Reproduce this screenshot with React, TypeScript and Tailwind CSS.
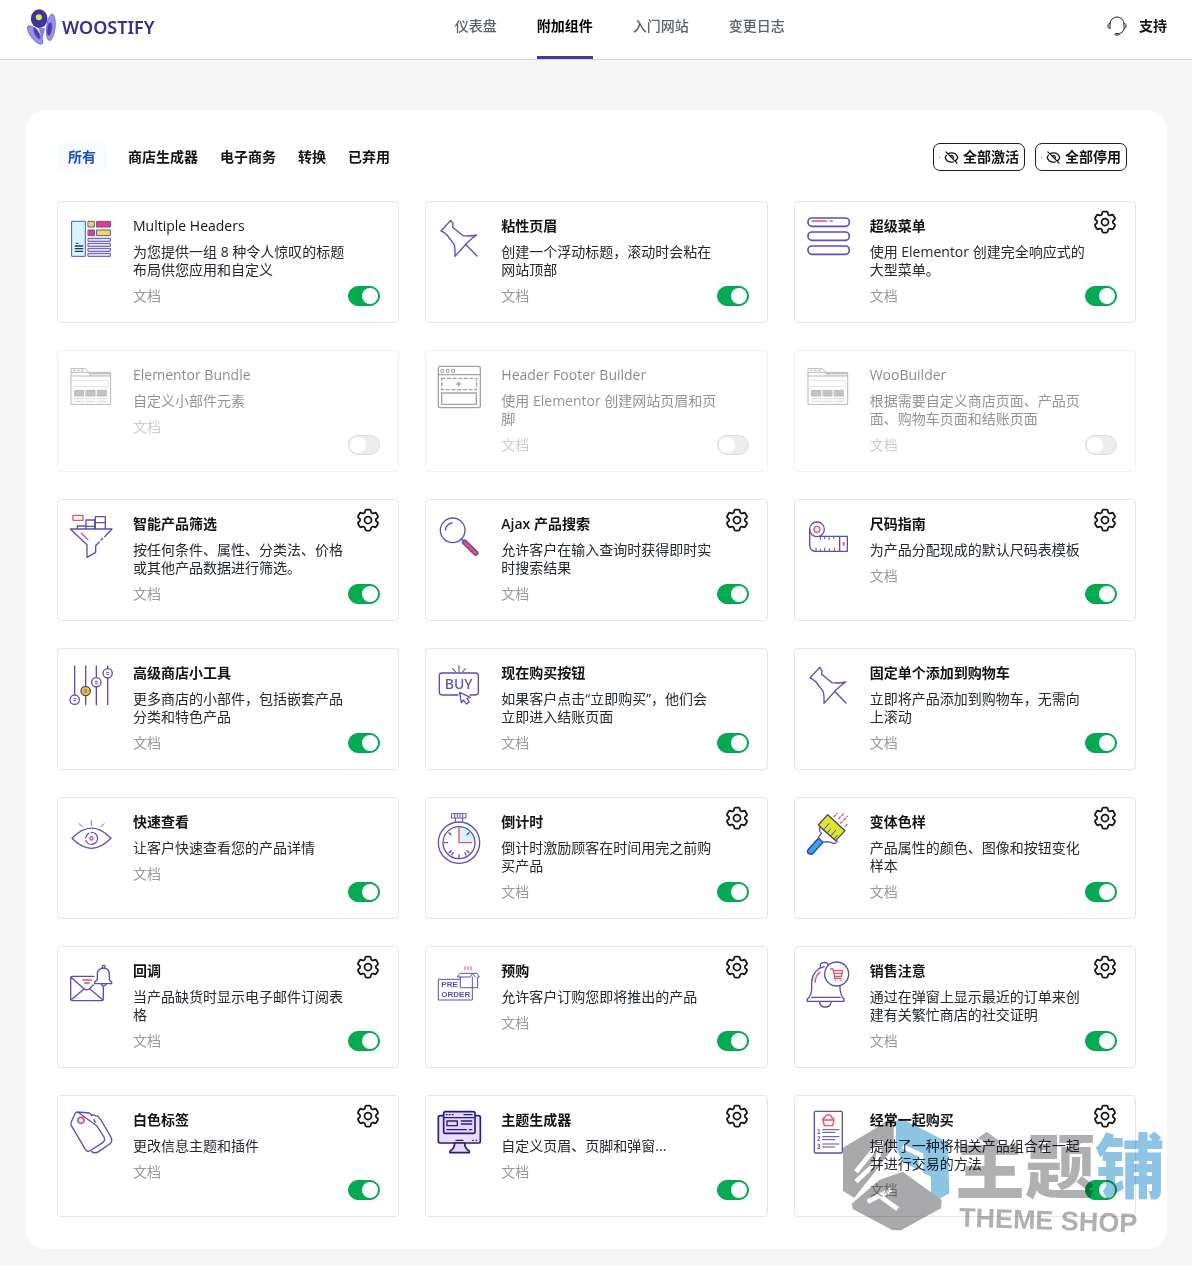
import { useState, type ReactNode } from "react";
import { HiOutlineCog6Tooth, HiOutlineEyeSlash } from "react-icons/hi2";

interface Addon {
  id: string;
  title: string;
  description: string;
  icon: ReactNode;
  enabled: boolean;
  hasSettings?: boolean;
}

const PURPLE = "#5a4fb5";
const PINK = "#e0506f";

const NAV_ITEMS = ["仪表盘", "附加组件", "入门网站", "变更日志"];
const TABS = ["所有", "商店生成器", "电子商务", "转换", "已弃用"];

function IconFrame({ children }: { children: ReactNode }) {
  return (
    <svg
      viewBox="0 0 129 129"
      className="size-[43px] shrink-0 overflow-visible"
      fill="none"
      stroke={PURPLE}
      strokeWidth="4"
      strokeLinejoin="round"
      strokeLinecap="round"
      aria-hidden="true"
    >
      {children}
    </svg>
  );
}

const HeadersIcon = () => (
  <IconFrame>
    <rect x="6" y="16" width="40" height="105" fill="#d5f6fb" strokeWidth="3" />
    <path d="M16 90h22M16 98h22M16 106h22M20 82h3" stroke="#27325e" />
    <rect x="55" y="16" width="18" height="17" fill="#e6e04a" strokeWidth="3" />
    <rect x="81" y="16" width="40" height="17" fill="#f03a78" strokeWidth="3" />
    <rect x="55" y="42" width="18" height="17" fill="#f03a78" strokeWidth="3" />
    <rect x="81" y="42" width="40" height="17" fill="#e6e04a" strokeWidth="3" />
    <path
      d="M55 67h66v9H55zM55 82h66v9H55zM55 97h66v9H55zM55 112h66v9H55z"
      fill="#e3e0fa"
      strokeWidth="3"
    />
  </IconFrame>
);

const PinIcon = () => (
  <IconFrame>
    <path d="M9 45 38 13l7 9-1 12 31 25q22 3 41-2-15 10-29 24L51 121q1-22-2-35L27 57Q17 47 9 45ZM84 86l33 34" />
  </IconFrame>
);

const MenuIcon = () => (
  <IconFrame>
    <g strokeWidth="5">
      <rect x="3" y="6" width="124" height="25" rx="12" />
      <rect x="3" y="48" width="124" height="25" rx="12" />
      <rect x="3" y="90" width="124" height="25" rx="12" />
    </g>
    <path d="M15 15h43M70 15h6" stroke={PINK} />
  </IconFrame>
);

const BrowserIcon = () => (
  <IconFrame>
    <g stroke="#777" strokeWidth="3">
      <path d="M3 117V11h44l9 11h66v95Z" />
      <path d="M3 22h53l6 11h60v-8H60M3 33h59" fill="#ccc" />
      <path d="M10 16h6M22 16h6M34 16h6" />
      <path d="M10 46h105v18H10" stroke="#ccc" />
      <path d="M15 76h26v17H15zM49 76h26v17H49zM83 76h26v17H83z" fill="#888" />
      <path d="M15 101h26M49 101h26M83 101h26M15 109h26M49 109h26M83 109h26" stroke="#aaa" />
    </g>
  </IconFrame>
);

const LayoutIcon = () => (
  <IconFrame>
    <g stroke="#4a4a4a" strokeWidth="4">
      <rect x="1" y="4" width="126" height="124" rx="5" />
      <path d="M1 29h126M62 51v12M56 57h12" />
      <path d="M10 13h7v9h-7zM26 13h7v9h-7zM42 13h7v9h-7z" strokeWidth="3" />
      <rect x="11" y="40" width="105" height="34" strokeDasharray="9 8" />
      <rect x="11" y="84" width="104" height="34" />
    </g>
  </IconFrame>
);

const FunnelIcon = () => (
  <IconFrame>
    <path d="M104 68 126 45H1l50 47v38l26-15V95l11-11M98 73l-5 5" />
    <path d="M22 44V36h25M48 44V18h26v26M76 44V8h30v36M48 37h26M76 26h30" />
    <path d="M9 4h30v15H9zM34 58l20 19" stroke={PINK} />
  </IconFrame>
);

const SearchIcon = () => (
  <IconFrame>
    <circle cx="44" cy="49" r="37" />
    <path d="M22 48q3-18 20-21" />
    <path d="m70 75 8 8" />
    <path d="m80 85 33 32" strokeWidth="17" />
    <path d="m80 85 33 32" stroke={PINK} strokeWidth="9" />
  </IconFrame>
);

const RulerIcon = () => (
  <IconFrame>
    <circle cx="30" cy="46" r="22" />
    <circle cx="30" cy="46" r="9" stroke={PINK} />
    <path d="M8 46v48q2 18 18 18h95V67H38M98 67v45" />
    <path d="M40 67v10M53 67v7M66 67v10M80 67v7M27 112v-10M40 112v-7M53 112v-10M67 112v-7M82 112v-10" strokeWidth="3" />
    <path d="M109 86v7h2v-7z" stroke={PINK} />
  </IconFrame>
);

const SlidersIcon = () => (
  <IconFrame>
    <path d="M14 9v85M47 9v61M47 98v27M79 9v35M79 72v53M113 9v8M113 45v80" />
    <circle cx="14" cy="110" r="14" />
    <circle cx="47" cy="84" r="14" fill="#f1c232" stroke="#4d4670" />
    <circle cx="79" cy="58" r="14" />
    <circle cx="113" cy="31" r="14" />
    <path d="M11 107h6M11 113h6M44 81h6M44 87h6M76 55h6M76 61h6M110 28h6M110 34h6" strokeWidth="3" />
  </IconFrame>
);

const BuyIcon = () => (
  <IconFrame>
    <path d="M60 96H12q-8 0-8-8V38q0-8 8-8h101q8 0 8 8v50q0 8-8 8h-17" />
    <path d="m44 17 8 9M63 8v17M82 17l-8 9" stroke="#77729b" />
    <text
      x="62"
      y="78"
      textAnchor="middle"
      fontSize="42"
      fontFamily="Noto Sans, sans-serif"
      fontWeight="500"
      fill={PURPLE}
      stroke="none"
    >
      BUY
    </text>
    <path d="m65 88 5 31 7-8 8 12 9-6-7-11 10-3Z" fill="#fff" />
  </IconFrame>
);

const EyeIcon = () => (
  <IconFrame>
    <path d="M6 79q58-61 117 0-59 60-117 0Z" />
    <path d="M64 61a18 18 0 1 1-16 25M47 77q3-9 9-13" />
    <circle cx="64" cy="79" r="5" stroke={PINK} />
    <path d="m27 35 10 9M64 26v14M102 35l-9 9" stroke="#a8586d" strokeWidth="3" />
  </IconFrame>
);

const StopwatchIcon = () => (
  <IconFrame>
    <path d="M63 44v48h48q-2-44-48-48Z" fill="#d3f5fb" stroke="none" />
    <circle cx="63" cy="92" r="62" />
    <circle cx="63" cy="92" r="48" />
    <path d="M42 5h42v13H42zM52 18v11M74 18v11M50 8v7M58 8v7M66 8v7M74 8v7" strokeWidth="3" />
    <path d="M63 128v9M20 92h9M33 62l6 6M93 62l-6 6M33 122l6-6M93 122l-6-6M42 129l3-7M84 129l-3-7" />
    <path d="M63 45v47h37" stroke={PINK} />
  </IconFrame>
);

const BrushIcon = () => (
  <IconFrame>
    <path d="M5 111q-8 9 1 14t14-3l28-31-13-13Z" fill="#32a8ee" stroke="#2b3f8f" />
    <path d="m34 77 9-13q-10-10-3-19l51 43q-9 11-19 3L59 89l-11 2Z" fill="#fff" />
    <path d="M34 39 62 8l52 48-28 30Z" fill="#dfe530" stroke="#46496b" />
    <path d="m51 52 15-17M62 61l9-10M72 71l14-16M82 80l9-10" stroke="#46496b" strokeWidth="3" />
    <path d="m81 14 10-10M95 20l16-16M101 33l20-20M115 43l8-9" stroke={PINK} strokeDasharray="7 6" />
  </IconFrame>
);

const MailBellIcon = () => (
  <IconFrame>
    <path d="M72 46H6q-4 0-4 4v65q0 4 4 4h90q4 0 4-4V76M3 49l39 34q8 7 16 0l12-11M3 117l39-33M99 117 60 84" />
    <path d="M74 68h51v-5l-7-7V38q-1-15-17-17-18 2-19 17v18l-8 7ZM97 20q-1-7 4-7t4 7M94 70q6 10 14 0" fill="#fff" />
    <path d="M39 57h25M44 66h14" stroke={PINK} />
  </IconFrame>
);

const PreorderIcon = () => (
  <IconFrame>
    <path d="M66 55H1v62h102V81" strokeWidth="3" />
    <path d="M67 79V48h-9l8-11h51l7 11h-5v31ZM67 48h30l6-10 9 10M103 48v31" strokeWidth="3" />
    <path d="M81 17v10M90 17v10M99 17v10" stroke={PINK} strokeWidth="3" />
    <g
      fontSize="24"
      fontFamily="Liberation Sans, sans-serif"
      fontWeight="700"
      fill={PURPLE}
      stroke="none"
    >
      <text x="10" y="79">PRE</text>
      <text x="10" y="108">ORDER</text>
    </g>
  </IconFrame>
);

const BellCartIcon = () => (
  <IconFrame>
    <path d="M52 17Q18 25 14 62v22q-1 21-13 30v7h110v-7q-9-8-12-30V73" />
    <path d="M40 20q-3-15 12-16 10 0 12 8M38 124q2 14 17 14t17-14M14 109h86" />
    <path d="M24 64q2-22 15-30" stroke={PINK} />
    <circle cx="89" cy="39" r="36" fill="#fff" />
    <path d="M71 24h7l5 22h20l4-17H80M81 37h24M84 46l-2 6h21M85 58h1M101 58h1" stroke={PINK} />
  </IconFrame>
);

const TagsIcon = () => (
  <IconFrame>
    <path d="M23 6 58 9l8 8M72 29l4 8M80 47l22 34q5 9-3 16l-40 26q-8 3-13-5L4 47q-3-7 0-12L15 11q3-5 8-5Z" />
    <path d="m66 14 18 5 9 11 30 52q6 12-4 20L87 124q-12 8-22 1" />
    <circle cx="33" cy="31" r="9" stroke={PINK} strokeWidth="5" />
  </IconFrame>
);

const MonitorIcon = () => (
  <IconFrame>
    <g stroke="#2a1d78" strokeWidth="5">
      <path d="M14 17H6q-5 0-5 5v72q0 5 5 5h116q5 0 5-5V22q0-5-5-5h-8" fill="#e9defd" />
      <rect x="17" y="5" width="94" height="65" rx="5" fill="#e4d6fc" />
      <path d="M25 14h2M34 14h2M43 14h2M78 14h24M20 23h88" strokeWidth="4" />
      <path d="M27 33h31v14H27zM70 33h31M70 42h31M27 59h58M94 59h7M54 91h21M104 91h2M114 91h2" strokeWidth="4" />
      <path d="M50 99q0 17-14 24v5h58v-5q-14-7-14-24Z" fill="#e4d6fc" />
    </g>
  </IconFrame>
);

const ChecklistIcon = () => (
  <IconFrame>
    <rect x="22" y="4" width="84" height="125" rx="4" />
    <path d="M48 30h33l-4 17H52ZM47 30q0-7 6-7M80 30q0-7-5-7M53 24q3-10 11-10t11 10" stroke={PINK} />
    <path d="M47 59h49M47 67h36M47 80h49M47 89h36M47 102h49M47 111h36" strokeWidth="3" />
    <g fontSize="19" fontFamily="Liberation Sans, sans-serif" fontWeight="700" fill={PURPLE} stroke="none">
      <text x="30" y="71">1</text>
      <text x="30" y="94">2</text>
      <text x="30" y="117">3</text>
    </g>
  </IconFrame>
);

const ADDONS: Addon[] = [
  { id: "multiple-headers", title: "Multiple Headers", description: "为您提供一组 8 种令人惊叹的标题布局供您应用和自定义", icon: <HeadersIcon />, enabled: true },
  { id: "sticky-header", title: "粘性页眉", description: "创建一个浮动标题，滚动时会粘在网站顶部", icon: <PinIcon />, enabled: true },
  { id: "mega-menu", title: "超级菜单", description: "使用 Elementor 创建完全响应式的大型菜单。", icon: <MenuIcon />, enabled: true, hasSettings: true },
  { id: "elementor-bundle", title: "Elementor Bundle", description: "自定义小部件元素", icon: <BrowserIcon />, enabled: false },
  { id: "header-footer", title: "Header Footer Builder", description: "使用 Elementor 创建网站页眉和页脚", icon: <LayoutIcon />, enabled: false },
  { id: "woobuilder", title: "WooBuilder", description: "根据需要自定义商店页面、产品页面、购物车页面和结账页面", icon: <BrowserIcon />, enabled: false },
  { id: "smart-filter", title: "智能产品筛选", description: "按任何条件、属性、分类法、价格或其他产品数据进行筛选。", icon: <FunnelIcon />, enabled: true, hasSettings: true },
  { id: "ajax-search", title: "Ajax 产品搜索", description: "允许客户在输入查询时获得即时实时搜索结果", icon: <SearchIcon />, enabled: true, hasSettings: true },
  { id: "size-guide", title: "尺码指南", description: "为产品分配现成的默认尺码表模板", icon: <RulerIcon />, enabled: true, hasSettings: true },
  { id: "shop-widgets", title: "高级商店小工具", description: "更多商店的小部件，包括嵌套产品分类和特色产品", icon: <SlidersIcon />, enabled: true },
  { id: "buy-now", title: "现在购买按钮", description: "如果客户点击“立即购买”，他们会立即进入结账页面", icon: <BuyIcon />, enabled: true },
  { id: "sticky-cart", title: "固定单个添加到购物车", description: "立即将产品添加到购物车，无需向上滚动", icon: <PinIcon />, enabled: true },
  { id: "quick-view", title: "快速查看", description: "让客户快速查看您的产品详情", icon: <EyeIcon />, enabled: true },
  { id: "countdown", title: "倒计时", description: "倒计时激励顾客在时间用完之前购买产品", icon: <StopwatchIcon />, enabled: true, hasSettings: true },
  { id: "swatches", title: "变体色样", description: "产品属性的颜色、图像和按钮变化样本", icon: <BrushIcon />, enabled: true, hasSettings: true },
  { id: "callback", title: "回调", description: "当产品缺货时显示电子邮件订阅表格", icon: <MailBellIcon />, enabled: true, hasSettings: true },
  { id: "pre-order", title: "预购", description: "允许客户订购您即将推出的产品", icon: <PreorderIcon />, enabled: true, hasSettings: true },
  { id: "sale-notice", title: "销售注意", description: "通过在弹窗上显示最近的订单来创建有关繁忙商店的社交证明", icon: <BellCartIcon />, enabled: true, hasSettings: true },
  { id: "white-label", title: "白色标签", description: "更改信息主题和插件", icon: <TagsIcon />, enabled: true, hasSettings: true },
  { id: "theme-builder", title: "主题生成器", description: "自定义页眉、页脚和弹窗...", icon: <MonitorIcon />, enabled: true, hasSettings: true },
  { id: "bought-together", title: "经常一起购买", description: "提供了一种将相关产品组合在一起并进行交易的方法", icon: <ChecklistIcon />, enabled: true, hasSettings: true },
];

// Latin-only titles read too heavy next to the Chinese ones at the same weight
const isLatin = (text: string) => /^[A-Za-z ]+$/.test(text);

function Logo() {
  return (
    <a href="#" className="flex items-center gap-[5px]">
      <svg viewBox="0 0 90 108" className="h-9 w-[31px]" aria-hidden="true">
        <g stroke="#6a5bd0" strokeWidth="2">
          <ellipse cx="26" cy="78" rx="13" ry="34" transform="rotate(-38 26 78)" fill="#9a90f0" />
          <ellipse cx="73" cy="55" rx="13" ry="40" transform="rotate(6 73 55)" fill="#9a90f0" />
          <ellipse cx="31" cy="73" rx="6" ry="19" transform="rotate(-26 31 73)" fill="#4a3ba8" />
          <ellipse cx="69" cy="60" rx="7" ry="20" transform="rotate(8 69 60)" fill="#4a3ba8" />
        </g>
        <path d="m36 56 20 2-9 34Z" fill="#8a7de8" />
        <ellipse cx="38" cy="29" rx="25" ry="28" fill="#41339d" />
        <circle cx="37" cy="25" r="9" fill="#dcf03c" />
      </svg>
      <span className="font-['Noto_Sans',sans-serif] text-lg font-semibold text-[#37308f]">WOOSTIFY</span>
    </a>
  );
}

function Header() {
  return (
    <header className="flex h-[60px] justify-between border-b border-[#d6d6d8] bg-white pr-[25px] pl-[26px]">
      <div className="flex items-center pb-[6px]">
        <Logo />
      </div>
      <nav className="flex gap-10">
        {NAV_ITEMS.map((item, index) => (
          <a
            key={item}
            href="#"
            className={
              index === 1
                ? "flex items-center border-b-3 border-[#4537a0] pb-1 font-semibold text-black"
                : "flex items-center pb-[7px] font-medium text-[#5a6268]"
            }
          >
            {item}
          </a>
        ))}
      </nav>
      <a href="#" className="flex items-center gap-3 pb-[7px] pl-[22px] font-semibold">
        <svg viewBox="0 0 20 20" className="size-5" fill="none" stroke="#222" aria-hidden="true">
          <path d="M3 8a7 7 0 0 1 14 0v5q-1 4-5 5M3 7.500H2Q1 8 1 10t1 2.500h1ZM17 7.500h1q1 .5 1 2.500t-1 2.500h-1M8 18.500q0-1 1-1h2.500q1 .5.500 1.500H9q-1 0-1-.5Z" />
        </svg>
        支持
      </a>
    </header>
  );
}

function BulkButton({ label, onClick }: { label: string; onClick: () => void }) {
  return (
    <button
      type="button"
      onClick={onClick}
      className="flex h-7 items-center rounded-[7px] border border-[#1d1d1d] px-[5px] font-semibold"
    >
      <span className="mr-1 size-px bg-gray-500" />
      <HiOutlineEyeSlash className="mr-1 size-[15px]" strokeWidth={2} />
      {label}
    </button>
  );
}

interface AddonCardProps {
  addon: Addon;
  enabled: boolean;
  onToggle: () => void;
}

function AddonCard({ addon, enabled, onToggle }: AddonCardProps) {
  return (
    <article
      className={
        enabled
          ? "flex min-h-[122px] rounded-sm border border-[#e6e6ea] pt-[14px] pr-[18px] pb-4 pl-3"
          : "flex min-h-[122px] rounded-sm border border-[#e6e6ea] pt-[14px] pr-[18px] pb-4 pl-3 opacity-50 grayscale"
      }
    >
      {addon.icon}
      <div className="ml-5 min-w-0 flex-1">
        <h2 className={isLatin(addon.title) ? "leading-5 font-medium" : "leading-5 font-semibold"}>
          {addon.title}
        </h2>
        <p className="mt-[7px] leading-[18px] text-[#23282d]">{addon.description}</p>
        <a href="#" className="mt-2 block leading-[18px] text-[#9a9a9a]">
          文档
        </a>
      </div>
      <div className="-ml-[2px] flex w-8 flex-col items-end">
        {addon.hasSettings && (
          <button type="button" aria-label={`${addon.title} 设置`} className="-mt-2 -mr-[2px]">
            <HiOutlineCog6Tooth className="size-7" />
          </button>
        )}
        <input
          type="checkbox"
          role="switch"
          aria-label={addon.title}
          checked={enabled}
          onChange={onToggle}
          className="mt-auto flex h-5 w-8 shrink-0 appearance-none items-center rounded-full border border-[#bbb] bg-[#ddd] px-px before:size-4 before:rounded-full before:bg-white checked:justify-end checked:border-[#04a14e] checked:bg-[#04ab53]"
        />
      </div>
    </article>
  );
}

function Watermark() {
  return (
    <div className="pointer-events-none absolute right-[2px] bottom-3 flex items-center mix-blend-multiply">
      <svg viewBox="160 980 330 360" className="h-[120px] w-[110px]" aria-hidden="true">
        <path d="M166 1078 305 995 318 1000 318 1075 262 1150 200 1228 166 1208Z" fill="#a9a9ab" />
        <path d="M325 1000 340 990 480 1062 485 1215 455 1232 430 1215 430 1165 345 1120 325 1080Z" fill="#8ec4e4" />
        <path d="M192 1246 275 1175 345 1150 462 1235 460 1260 340 1326 315 1326 195 1262Z" fill="#a9a9ab" />
        <path
          d="M205 1150 280 1058 268 1120 205 1180M345 1075 400 1100 400 1150M240 1240 310 1205M275 1222 330 1262"
          fill="none"
          stroke="#fff"
          strokeWidth="14"
        />
      </svg>
      <div className="ml-1 pt-3">
        <div className="font-['Noto_Sans_CJK_SC',sans-serif] text-[70px] leading-[76px] font-black text-[#b0b0b2]">
          主题<span className="text-[#8ec4e4]">铺</span>
        </div>
        <div className="rotate-2 pt-1 pl-1 font-['Liberation_Sans',sans-serif] text-[27px] leading-8 font-bold text-[#b0b0b2]">
          THEME SHOP
        </div>
      </div>
    </div>
  );
}

export default function App() {
  const [activeTab, setActiveTab] = useState(TABS[0]);
  const [enabledIds, setEnabledIds] = useState<string[]>(
    ADDONS.filter((addon) => addon.enabled).map((addon) => addon.id)
  );

  const toggle = (id: string) => {
    setEnabledIds((current) =>
      current.includes(id) ? current.filter((item) => item !== id) : [...current, id]
    );
  };

  return (
    <div className="min-h-screen bg-[#f6f6f7] font-['Open_Sans','Noto_Sans_CJK_SC',sans-serif] text-sm text-[#141414]">
      <Header />
      <main className="pt-[50px] pr-[25px] pb-[17px] pl-[26px]">
        <section className="relative rounded-[20px] bg-white px-[31px] pt-[33px] pb-8">
          <div className="flex items-center justify-between pr-[9px]">
            <div role="tablist" className="flex">
              {TABS.map((tab) => (
                <button
                  key={tab}
                  type="button"
                  role="tab"
                  aria-selected={tab === activeTab}
                  onClick={() => setActiveTab(tab)}
                  className={
                    tab === activeTab
                      ? "mr-[10px] h-7 rounded bg-[#f8fcff] px-[11px] font-semibold text-[#1b4fc4]"
                      : "h-7 px-[11px] font-semibold"
                  }
                >
                  {tab}
                </button>
              ))}
            </div>
            <div className="flex gap-[10px]">
              <BulkButton label="全部激活" onClick={() => setEnabledIds(ADDONS.map((addon) => addon.id))} />
              <BulkButton label="全部停用" onClick={() => setEnabledIds([])} />
            </div>
          </div>
          <div className="mt-[30px] grid grid-cols-3 gap-x-[26px] gap-y-[27px]">
            {ADDONS.map((addon) => (
              <AddonCard
                key={addon.id}
                addon={addon}
                enabled={enabledIds.includes(addon.id)}
                onToggle={() => toggle(addon.id)}
              />
            ))}
          </div>
          <Watermark />
        </section>
      </main>
    </div>
  );
}
